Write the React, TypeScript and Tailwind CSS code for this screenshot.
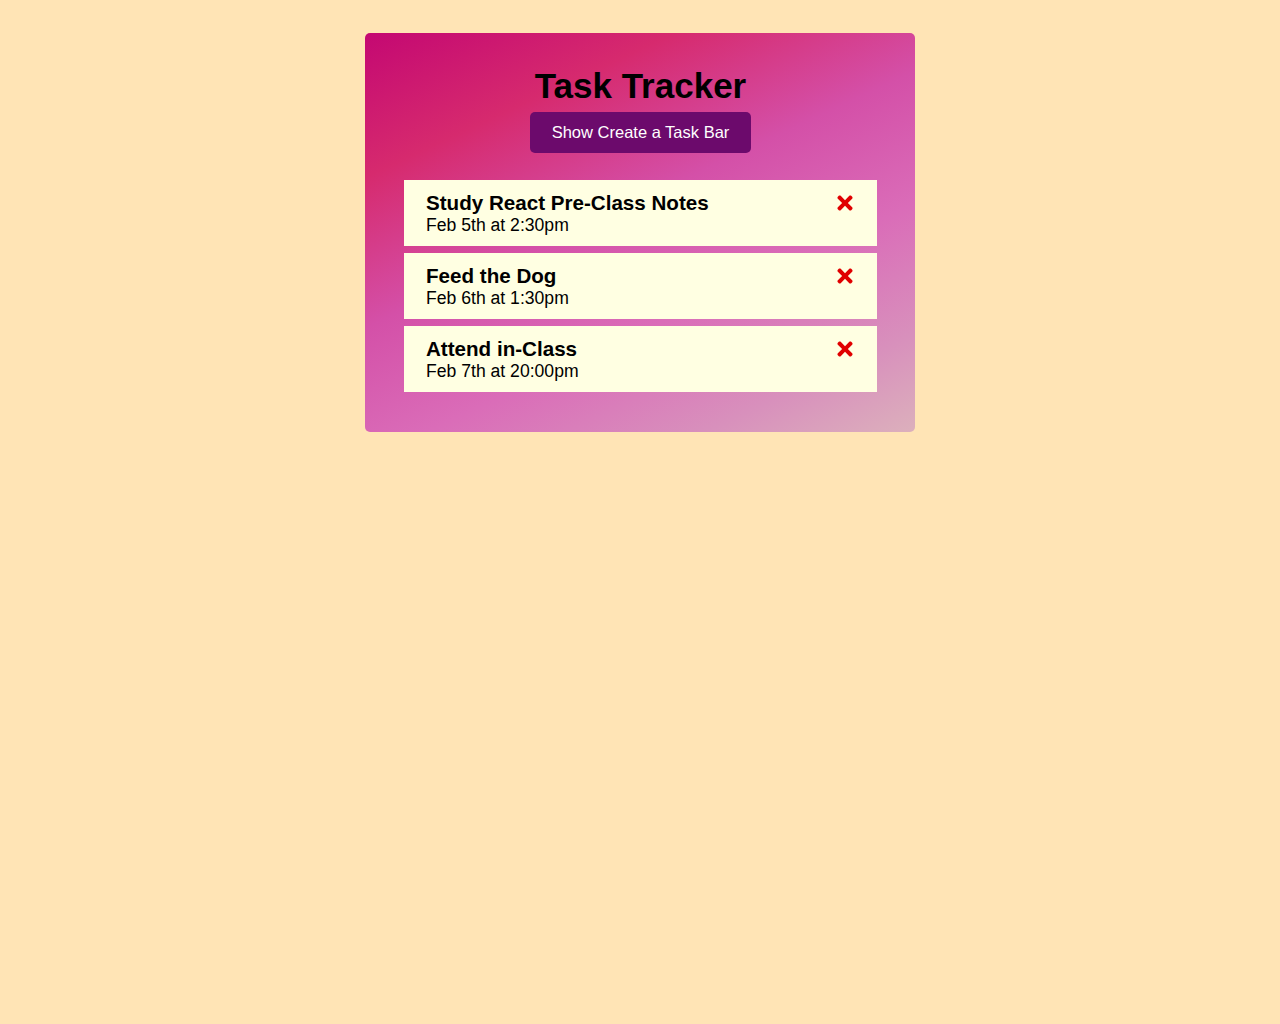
import React from "react";
import { FaTimes } from "react-icons/fa";

type Task = {
  id: number;
  text: string;
  day: string;
};

const tasks: Task[] = [
  { id: 1, text: "Study React Pre-Class Notes", day: "Feb 5th at 2:30pm" },
  { id: 2, text: "Feed the Dog", day: "Feb 6th at 1:30pm" },
  { id: 3, text: "Attend in-Class", day: "Feb 7th at 20:00pm" },
];

function TaskRow({ task }: { task: Task }) {
  return (
    <div className="flex items-start justify-between bg-[#ffffe2] pl-[22px] pr-[21px] pt-[12px] pb-[10px]">
      <div>
        <h3 className="text-[20.6px] leading-[22px] font-bold text-black">{task.text}</h3>
        <p className="text-[17.6px] leading-[22px] text-black">{task.day}</p>
      </div>
      <div className="h-[22px] flex items-center">
        <FaTimes className="text-[22px] text-[#e00000]" />
      </div>
    </div>
  );
}

export default function App() {
  return (
    <div
      className="min-h-[1024px] w-full bg-[#ffe4b5] pt-[33px]"
      style={{ fontFamily: '"Liberation Sans", Arial, sans-serif' }}
    >
      <div className="mx-auto w-[550px] rounded-[5px] bg-[linear-gradient(155deg,#c40872_0%,#d62a6e_22%,#d450a8_45%,#da6cb8_65%,#d890bc_85%,#dcb0bc_100%)] pl-[39px] pr-[38px] pt-[33px] pb-[40px]">
        <header className="flex flex-col items-center">
          <h1 className="text-[35px] leading-[40px] font-bold text-black">Task Tracker</h1>
          <button
            type="button"
            className="mt-[6px] h-[41px] rounded-[5px] bg-[#6c0a6c] px-[22px] text-[16.5px] text-white"
          >
            Show Create a Task Bar
          </button>
        </header>

        <div className="mt-[27px] flex flex-col gap-[7px]">
          {tasks.map((t) => (
            <TaskRow key={t.id} task={t} />
          ))}
        </div>
      </div>
    </div>
  );
}
